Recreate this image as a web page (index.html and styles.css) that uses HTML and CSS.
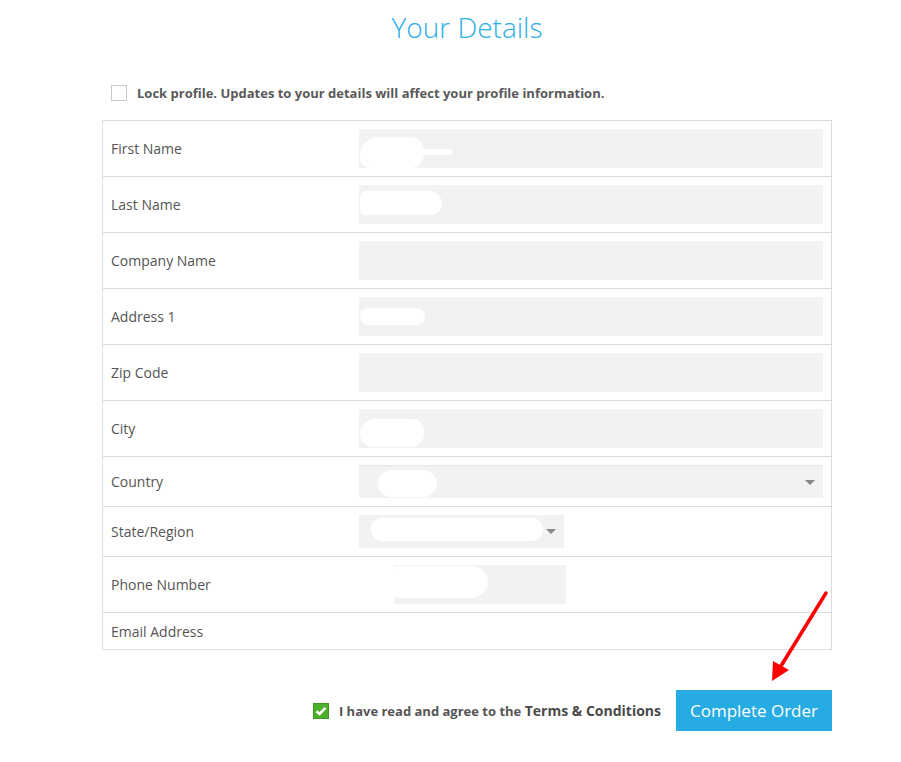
FILE: index.html
```html
<!DOCTYPE html>
<html>
<head>
<meta charset="utf-8">
<link rel="stylesheet" href="styles.css">
</head>
<body>
<div class="page">
  <h1 class="title">Your Details</h1>
  <label class="lock">
    <span class="box"></span>
    <span class="lock-text">Lock profile. Updates to your details will affect your profile information.</span>
  </label>
  <table class="details">
    <tr class="row-input">
      <td class="lbl">First Name</td>
      <td class="fld"><div class="input"><span class="blob b1"></span></div></td>
    </tr>
    <tr class="row-input">
      <td class="lbl">Last Name</td>
      <td class="fld"><div class="input"><span class="blob b2"></span></div></td>
    </tr>
    <tr class="row-input">
      <td class="lbl">Company Name</td>
      <td class="fld"><div class="input"></div></td>
    </tr>
    <tr class="row-input">
      <td class="lbl">Address 1</td>
      <td class="fld"><div class="input"><span class="blob b3"></span></div></td>
    </tr>
    <tr class="row-input">
      <td class="lbl">Zip Code</td>
      <td class="fld"><div class="input"></div></td>
    </tr>
    <tr class="row-input">
      <td class="lbl">City</td>
      <td class="fld"><div class="input"><span class="blob b4"></span></div></td>
    </tr>
    <tr class="row-select">
      <td class="lbl">Country</td>
      <td class="fld"><div class="select full"><span class="blob b5"></span><span class="caret"></span></div></td>
    </tr>
    <tr class="row-select">
      <td class="lbl">State/Region</td>
      <td class="fld"><div class="select short"><span class="blob b6"></span><span class="caret"></span></div></td>
    </tr>
    <tr class="row-input">
      <td class="lbl">Phone Number</td>
      <td class="fld"><div class="input phone"><span class="blob b7"></span></div></td>
    </tr>
    <tr class="row-email">
      <td class="lbl">Email Address</td>
      <td class="fld"></td>
    </tr>
  </table>
  <div class="actions">
    <label class="agree">
      <span class="check"><svg viewBox="0 0 16 16" width="16" height="16"><rect x="0.5" y="0.5" width="15" height="15" fill="#4cb02a" stroke="#3c9a1e"/><path d="M3.5 8.2 L6.6 11 L12.4 4.8" fill="none" stroke="#fff" stroke-width="2.6"/></svg></span>
      <span class="agree-text">I have read and agree to the <span class="terms">Terms &amp; Conditions</span></span>
    </label>
    <button class="submit">Complete Order</button>
  </div>
  <svg class="arrow" width="80" height="110" viewBox="0 0 80 110">
    <line x1="71" y1="5" x2="26" y2="78" stroke="#ff0000" stroke-width="3.5" stroke-linecap="round"/>
    <polygon points="17,93 18,73 34,82" fill="#ff0000"/>
  </svg>
</div>
</body>
</html>
```
FILE: styles.css
```css
* { box-sizing: border-box; }
body {
  margin: 0;
  background: #fff;
  font-family: "Open Sans", "Liberation Sans", sans-serif;
  color: #555;
}
.page {
  position: relative;
  width: 730px;
  margin-left: 102px;
}
.title {
  margin: 0;
  padding-top: 8px;
  height: 74px;
  text-align: center;
  font-weight: 300;
  font-size: 28px;
  line-height: 38px;
  color: #2aaee6;
}
.lock {
  display: flex;
  align-items: center;
  padding-left: 9px;
  height: 38px;
  margin-bottom: 8px;
}
.box {
  width: 16px;
  height: 16px;
  border: 1px solid #c8c8c8;
  background: #fff;
  margin-right: 10px;
}
.lock-text {
  font-size: 13px;
  font-weight: 700;
  color: #595959;
}
.details {
  width: 730px;
  border-collapse: collapse;
  border: 1px solid #dcdcdc;
}
.details td {
  border-bottom: 1px solid #dcdcdc;
  padding: 8px 8px;
  vertical-align: middle;
}
.details td.lbl {
  width: 256px;
  font-size: 14px;
  color: #555;
}
.details td.fld { padding-left: 0; }
.row-input td { height: 55px; }
.row-select td { height: 49px; }
.row-email td { height: 37px; padding-top: 4px; padding-bottom: 4px; }
.input {
  height: 39px;
  background: #f2f2f2;
  position: relative;
}
.input.phone {
  width: 172px;
  margin-left: 35px;
}
.select {
  height: 33px;
  background: #f2f2f2;
  border-top: 1px solid #e6e6e6;
  position: relative;
}
.select.short { width: 205px; border-top: none; }
.caret {
  position: absolute;
  right: 8px;
  top: 14px;
  width: 0;
  height: 0;
  border-left: 5px solid transparent;
  border-right: 5px solid transparent;
  border-top: 5px solid #888;
}
.blob {
  position: absolute;
  background: #fff;
  border-radius: 14px;
}
.b1 { left: 1px; top: 8px; width: 64px; height: 31px; border-radius: 18px 14px 14px 10px; }
.b1::after { content: ""; position: absolute; left: 60px; top: 12px; width: 32px; height: 6px; background: #fff; border-radius: 3px; }
.b2 { left: 1px; top: 6px; width: 82px; height: 24px; border-radius: 8px 16px 14px 8px; }
.b3 { left: 1px; top: 11px; width: 65px; height: 17px; }
.b4 { left: 1px; top: 10px; width: 64px; height: 28px; border-radius: 16px 12px 14px 14px; }
.b5 { left: 19px; top: 4px; width: 59px; height: 27px; border-radius: 14px; }
.b6 { left: 12px; top: 3px; width: 172px; height: 23px; border-radius: 12px; }
.b7 { left: 0; top: 1px; width: 94px; height: 32px; border-radius: 4px 18px 18px 4px; }
.actions {
  display: flex;
  justify-content: flex-end;
  align-items: center;
  margin-top: 40px;
}
.agree {
  display: flex;
  align-items: center;
}
.check { display: flex; margin-right: 10px; }
.agree-text {
  font-size: 13px;
  font-weight: 700;
  color: #555;
  margin-right: 15px;
}
.terms { font-size: 14px; color: #4a4a4a; }
.submit {
  width: 156px;
  height: 41px;
  border: none;
  background: #27abe3;
  color: #fff;
  font-family: "Open Sans", "Liberation Sans", sans-serif;
  font-size: 17px;
  padding: 0;
}
.arrow {
  position: absolute;
  left: 653px;
  top: 588px;
}
```
